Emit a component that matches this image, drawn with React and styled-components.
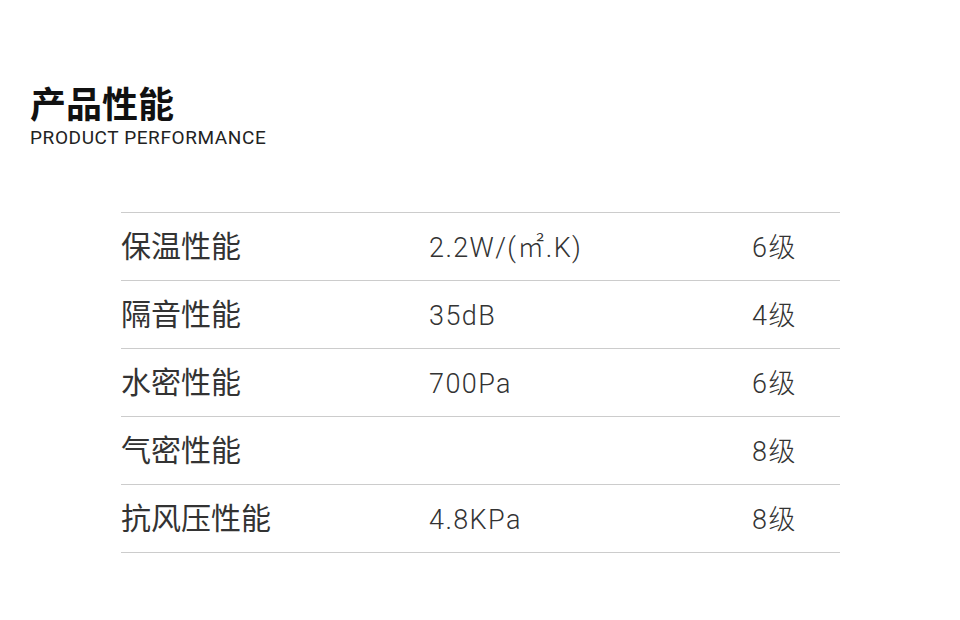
import React from 'react';
import styled, { createGlobalStyle } from 'styled-components';

const GlobalStyle = createGlobalStyle`
    html, body {
        margin: 0;
        padding: 0;
        background: #fff;
    }
    body {
        font-family: Roboto, "Noto Sans CJK SC", sans-serif;
        color: #333;
    }
`;

const rows = [
    { name: '保温性能', value: '2.2W/(㎡.K)', level: '6级' },
    { name: '隔音性能', value: '35dB', level: '4级' },
    { name: '水密性能', value: '700Pa', level: '6级' },
    { name: '气密性能', value: '', level: '8级' },
    { name: '抗风压性能', value: '4.8KPa', level: '8级' },
];

const App = () => {
    return (
        <Page>
            <GlobalStyle />
            <Header>
                <Title>产品性能</Title>
                <Subtitle>PRODUCT PERFORMANCE</Subtitle>
            </Header>
            <Table>
                {rows.map((row) => (
                    <Row key={row.name}>
                        <NameCell>{row.name}</NameCell>
                        <ValueCell>{row.value}</ValueCell>
                        <ValueCell>{row.level}</ValueCell>
                    </Row>
                ))}
            </Table>
        </Page>
    );
};

const Page = styled.div`
    width: 960px;
    height: 620px;
    padding: 76px 0 0 30px;
    box-sizing: border-box;
`;

const Header = styled.div`
    display: flex;
    flex-direction: column;
`;

const Title = styled.h1`
    margin: 0;
    font-family: "Noto Sans CJK SC", sans-serif;
    font-size: 36px;
    font-weight: 700;
    line-height: 52px;
    color: #111;
`;

const Subtitle = styled.p`
    margin: 0;
    font-family: Roboto, sans-serif;
    font-size: 19px;
    line-height: 20px;
    color: #222;
    letter-spacing: 0.6px;
`;

const Table = styled.div`
    width: 719px;
    margin: 64px 0 0 91px;
    border-top: 1px solid #ccc;
`;

const Row = styled.div`
    display: grid;
    grid-template-columns: 308px 323px 1fr;
    align-content: center;
    align-items: baseline;
    height: 61px;
    padding-bottom: 6px;
    border-bottom: 1px solid #ccc;
`;

const NameCell = styled.div`
    font-family: "Noto Sans CJK SC", sans-serif;
    font-size: 30px;
    color: #333;
`;

const ValueCell = styled.div`
    font-family: Roboto, "Noto Sans CJK SC", sans-serif;
    font-size: 27px;
    font-weight: 300;
    letter-spacing: 1.4px;
    color: #333;
`;

export default App;
